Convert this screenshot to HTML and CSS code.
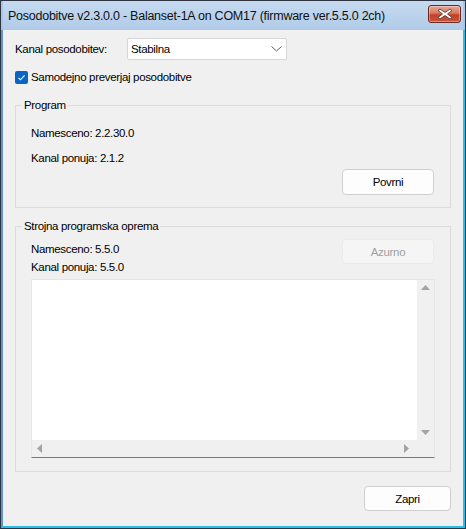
FILE: index.html
```html
<!DOCTYPE html>
<html>
<head>
<meta charset="utf-8">
<link rel="stylesheet" href="styles.css">
</head>
<body>
<div class="window">
  <div class="titlebar">
    <span class="title">Posodobitve v2.3.0.0 - Balanset-1A on COM17 (firmware ver.5.5.0 2ch)</span>
    <div class="close">
      <svg width="18" height="12" viewBox="0 0 18 12">
        <path d="M4 1 L9 4.5 L14 1 L16 2.5 L11.5 6 L16 9.5 L14 11 L9 7.5 L4 11 L2 9.5 L6.5 6 L2 2.5 Z" fill="#fff" stroke="#4a2a24" stroke-width="0.8" stroke-linejoin="round"/>
      </svg>
    </div>
  </div>
  <div class="client">
    <div class="row-channel">
      <span class="label">Kanal posodobitev:</span>
      <div class="combo">
        <span>Stabilna</span>
        <svg class="chev" width="11" height="6" viewBox="0 0 11 6"><path d="M0.5 0.5 L5.5 5 L10.5 0.5" fill="none" stroke="#606060" stroke-width="1"/></svg>
      </div>
    </div>
    <div class="row-check">
      <span class="checkbox">
        <svg width="13" height="13" viewBox="0 0 13 13"><path d="M3.5 6.8 L5.5 8.8 L9.6 4.4" fill="none" stroke="#fff" stroke-width="1.1"/></svg>
      </span>
      <span>Samodejno preverjaj posodobitve</span>
    </div>

    <fieldset class="group g-program">
      <legend>Program</legend>
      <div class="line l1">Namesceno: 2.2.30.0</div>
      <div class="line l2">Kanal ponuja: 2.1.2</div>
      <div class="btn-row"><div class="btn">Povrni</div></div>
    </fieldset>

    <fieldset class="group g-fw">
      <legend>Strojna programska oprema</legend>
      <div class="fw-top">
        <div class="fw-lines">
          <div class="line f1">Namesceno: 5.5.0</div>
          <div class="line f2">Kanal ponuja: 5.5.0</div>
        </div>
        <div class="btn disabled">Azurno</div>
      </div>
      <div class="textbox">
        <div class="tb-main">
          <div class="tb-area"></div>
          <div class="vscroll">
            <svg width="17" height="9" viewBox="0 0 17 9"><path d="M4 8 L8.5 3 L13 8 Z" fill="#a3a3a3"/></svg>
            <svg width="17" height="9" viewBox="0 0 17 9"><path d="M4 2 L8.5 7 L13 2 Z" fill="#a3a3a3"/></svg>
          </div>
        </div>
        <div class="hscroll">
          <div class="hbar">
            <svg width="9" height="17" viewBox="0 0 9 17"><path d="M8 4 L3 8.5 L8 13 Z" fill="#a3a3a3"/></svg>
            <svg width="9" height="17" viewBox="0 0 9 17"><path d="M2 4 L7 8.5 L2 13 Z" fill="#a3a3a3"/></svg>
          </div>
          <div class="corner"></div>
        </div>
      </div>
    </fieldset>

    <div class="bottom-row"><div class="btn zapri">Zapri</div></div>
  </div>
</div>
</body>
</html>
```

FILE: styles.css
```css
html, body {
  margin: 0;
  padding: 0;
  background: #f0f0f0;
}
.window {
  width: 466px;
  height: 529px;
  box-sizing: border-box;
  border: 1px solid #2e3440;
  display: flex;
  flex-direction: column;
  font-family: "Liberation Sans", Arial, sans-serif;
  font-size: 11.5px;
  letter-spacing: -0.33px;
  color: #000;
}
.titlebar {
  height: 29px;
  flex: none;
  display: flex;
  align-items: flex-start;
  background: linear-gradient(#c6daf0, #b0cbe8);
  border-left: 2px solid #a9c6e6;
  border-right: 2px solid #a9c6e6;
  box-sizing: border-box;
}
.title {
  font-size: 12.5px;
  letter-spacing: -0.25px;
  margin-left: 5px;
  margin-top: 8px;
  color: #111;
  white-space: nowrap;
}
.close {
  margin-left: auto;
  margin-right: 2px;
  margin-top: 4px;
  width: 31px;
  height: 16px;
  border: 1px solid #6a2b22;
  border-radius: 3px;
  background: linear-gradient(#e8a897 0%, #d8785f 45%, #c2412a 55%, #c9553a 100%);
  display: flex;
  align-items: center;
  justify-content: center;
  box-shadow: inset 0 0 0 1px rgba(255,255,255,0.35);
}
.client {
  flex: 1;
  background: #f0f0f0;
  border-left: 2px solid #5f94d6;
  border-right: 2px solid #27c0ea;
  border-bottom: 2px solid #27c0ea;
  box-sizing: border-box;
  padding: 0 12px 0 12px;
  display: flex;
  flex-direction: column;
}
.row-channel {
  margin-top: 8px;
  display: flex;
  align-items: center;
  height: 22px;
}
.row-channel .label {
  width: 112px;
}
.combo {
  width: 160px;
  height: 22px;
  box-sizing: border-box;
  border: 1px solid #d6d6d6;
  border-radius: 2px;
  background: #fff;
  display: flex;
  align-items: center;
  padding-left: 3px;
  padding-right: 4px;
}
.combo .chev {
  margin-left: auto;
}
.row-check {
  margin-top: 10px;
  display: flex;
  align-items: center;
  height: 14px;
}
.checkbox {
  width: 13px;
  height: 13px;
  border-radius: 2px;
  background: #0a64c4;
  margin-right: 3px;
  display: flex;
}
.group {
  margin: 0;
  padding: 0 16px 0 15px;
  border: 1px solid #dcdcdc;
  min-width: 0;
}
.group legend {
  padding: 0 2px;
  margin-left: -9px;
  line-height: 14px;
  height: 14px;
}
.g-program {
  margin-top: 14px;
  padding-bottom: 12px;
}
.line {
  height: 14px;
  line-height: 14px;
}
.l1 { margin-top: 14px; }
.l2 { margin-top: 11px; }
.btn-row {
  display: flex;
  justify-content: flex-end;
  margin-top: 4px;
}
.btn {
  width: 92px;
  height: 26px;
  box-sizing: border-box;
  border: 1px solid #cfcfcf;
  border-radius: 4px;
  background: #fdfdfd;
  display: flex;
  align-items: center;
  justify-content: center;
}
.btn.disabled {
  height: 25px;
  background: #f5f5f5;
  border-color: #ebebeb;
  color: #a0a0a0;
}
.g-fw {
  margin-top: 11px;
  padding-bottom: 13px;
}
.fw-top {
  display: flex;
  justify-content: space-between;
  margin-top: 6px;
}
.f1 { margin-top: 3px; }
.f2 { margin-top: 4px; }
.textbox {
  margin-top: 5px;
  width: 404px;
  height: 179px;
  box-sizing: border-box;
  border: 1px solid #e6e6e6;
  border-bottom: 1px solid #7a7a7a;
  display: flex;
  flex-direction: column;
  background: #fff;
}
.tb-main {
  flex: 1;
  display: flex;
}
.tb-area {
  flex: 1;
  background: #fff;
}
.vscroll {
  width: 17px;
  background: #f0f0f0;
  display: flex;
  flex-direction: column;
  justify-content: space-between;
  padding: 2px 0 3px;
}
.hscroll {
  height: 17px;
  display: flex;
  background: #f0f0f0;
}
.hbar {
  flex: 1;
  display: flex;
  justify-content: space-between;
  padding: 0 6px 0 2px;
}
.corner {
  width: 17px;
  background: #f0f0f0;
}
.bottom-row {
  display: flex;
  justify-content: flex-end;
  margin-top: 14px;
}
.btn.zapri {
  width: 87px;
  height: 25px;
}
```
